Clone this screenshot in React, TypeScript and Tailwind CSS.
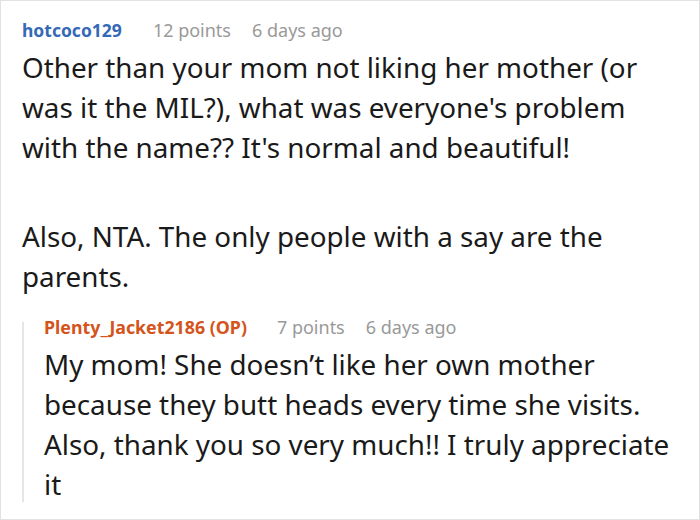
import React from "react";

const font = { fontFamily: '"Noto Sans", "Open Sans", sans-serif' };

type MetaProps = { name: string; points: string; age: string; nameClass: string };

const Meta = ({ name, points, age, nameClass }: MetaProps) => (
  <div className="flex items-center text-[18px] leading-[24px] whitespace-nowrap">
    <span className={`font-bold ${nameClass} mr-[31px]`}>{name}</span>
    <span className="text-[#999999] mr-[21px]">{points}</span>
    <span className="text-[#999999]">{age}</span>
  </div>
);

export default function App() {
  return (
    <div
      className="w-[700px] h-[520px] bg-white border border-[#e2e2e2] pl-[21px] pr-[21px] pt-[17px] text-[#1a1a1a] overflow-hidden"
      style={font}
    >
      <Meta
        name="hotcoco129"
        points="12 points"
        age="6 days ago"
        nameClass="text-[#3469b8] text-[17.5px]"
      />
      <div className="mt-[5px] text-[27.8px] leading-[40px]">
        <p>
          Other than your mom not liking her mother (or was it the MIL?), what was everyone's problem
          with the name?? It's normal and beautiful!
        </p>
        <p className="mt-[49px]">Also, NTA. The only people with a say are the parents.</p>
      </div>

      <div className="flex mt-[19px]">
        <div className="w-[2px] bg-[#e6e6e6] mt-[7px] mb-[2px] shrink-0" />
        <div className="pl-[20px]">
          <Meta
            name="Plenty_Jacket2186 (OP)"
            points="7 points"
            age="6 days ago"
            nameClass="text-[#d4541c] text-[17.8px] !mr-[30px]"
          />
          <p className="mt-[5px] text-[27.8px] leading-[40px]">
            My mom! She doesn’t like her own mother because they butt heads every time she visits.
            Also, thank you so very much!! I truly appreciate it
          </p>
        </div>
      </div>
    </div>
  );
}
